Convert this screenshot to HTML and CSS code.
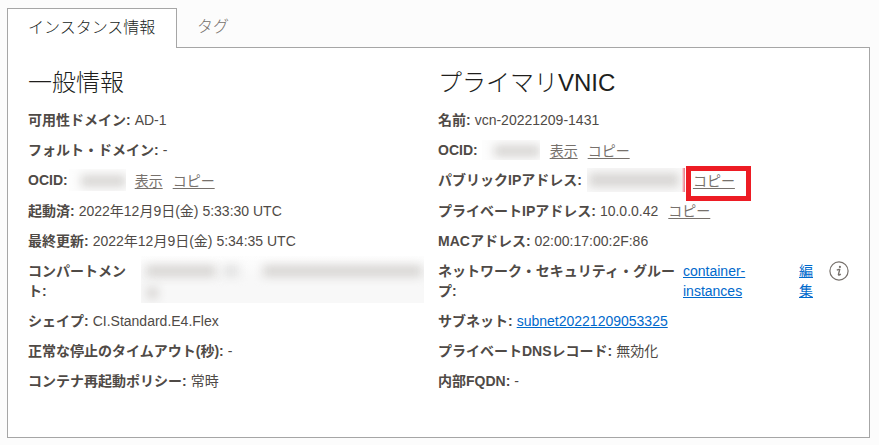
FILE: index.html
```html
<!DOCTYPE html>
<html lang="ja">
<head>
<meta charset="utf-8">
<title>インスタンス情報</title>
<link rel="stylesheet" href="styles.css">
</head>
<body>
<nav class="tabs">
  <div class="tab active">インスタンス情報</div>
  <div class="tab">タグ</div>
</nav>
<main class="panel">
  <section class="general">
    <h2>一般情報</h2>
    <div class="row"><b>可用性ドメイン:</b><span>AD-1</span></div>
    <div class="row"><b>フォルト・ドメイン:</b><span>-</span></div>
    <div class="row with-actions"><b>OCID:</b><span class="mask ocid"><i></i></span><a class="action">表示</a><a class="action">コピー</a></div>
    <div class="row"><b>起動済:</b><span>2022年12月9日(金) 5:33:30 UTC</span></div>
    <div class="row"><b>最終更新:</b><span>2022年12月9日(金) 5:34:35 UTC</span></div>
    <div class="row"><b class="compartment-label">コンパートメント:</b><span class="mask compartment"><i></i><i></i><i></i><i></i></span></div>
    <div class="row"><b>シェイプ:</b><span>CI.Standard.E4.Flex</span></div>
    <div class="row"><b>正常な停止のタイムアウト(秒):</b><span>-</span></div>
    <div class="row"><b>コンテナ再起動ポリシー:</b><span>常時</span></div>
  </section>
  <section class="vnic">
    <h2>プライマリVNIC</h2>
    <div class="row"><b>名前:</b><span>vcn-20221209-1431</span></div>
    <div class="row"><b>OCID:</b><span class="mask vnic-id"><i></i></span><a class="action">表示</a><a class="action">コピー</a></div>
    <div class="row with-actions"><b>パブリックIPアドレス:</b><span class="mask public-ip"><i></i></span><a class="action highlight">コピー</a></div>
    <div class="row"><b>プライベートIPアドレス:</b><span>10.0.0.42</span><a class="action inline">コピー</a></div>
    <div class="row"><b>MACアドレス:</b><span>02:00:17:00:2F:86</span></div>
    <div class="row"><b class="group-label">ネットワーク・セキュリティ・グループ:</b><a class="link group">container-instances</a><a class="link edit">編集</a>
      <svg class="info" width="20" height="20" viewBox="0 0 20 20" fill="none" stroke="#77716c"><circle cx="10" cy="10" r="9.1" stroke-width="1.2"/><circle cx="10.9" cy="5.9" r="1.1" fill="#77716c" stroke="none"/><path d="M7.8 9.2 Q9.3 8.2 10.7 8.5 L9.4 13.5 Q9.5 14.7 11.8 13.1" stroke-width="1.35"/></svg>
    </div>
    <div class="row"><b>サブネット:</b><a class="link">subnet20221209053325</a></div>
    <div class="row"><b>プライベートDNSレコード:</b><span>無効化</span></div>
    <div class="row"><b>内部FQDN:</b><span>-</span></div>
  </section>
</main>
</body>
</html>
```
FILE: styles.css
```css
*, *::after { box-sizing: border-box; }
body {
  margin: 0;
  padding: 8px 9px 7px 7px;
  height: 445px;
  overflow: hidden;
  background: #fcfcfc;
  color: #4f4a46;
  font: 14px/20px "Liberation Sans", "Noto Sans CJK JP", sans-serif;
}
.tabs { display: flex; height: 39px; }
.tab {
  height: 39px;
  padding: 0 20px;
  font-size: 16px;
  line-height: 37px;
  font-weight: 300;
  color: #77716c;
}
.tab.active {
  position: relative;
  height: 40px;
  width: 170px;
  border: 1px solid #a6a6a6;
  border-bottom: 0;
  background: #fff;
  color: #201e1c;
}
.panel {
  display: flex;
  height: 391px;
  padding: 20px 20px 0;
  border: 1px solid #a6a6a6;
  background: #fff;
}
.general { width: 410px; flex: none; }
.vnic { width: 411px; flex: none; }
h2 {
  margin: 0 0 12px;
  height: 30px;
  font-size: 24px;
  line-height: 30px;
  font-weight: 300;
  color: #201e1c;
}
.row {
  display: flex;
  gap: 4px;
  min-height: 20px;
  margin-bottom: 10px;
  white-space: nowrap;
}
.with-actions { margin-bottom: 11px; }
.row b { flex: none; }
.action { margin: 1px 0 -1px 6px; color: #77716c; text-decoration: underline; text-underline-offset: 2px; }
.action.inline { margin-top: 0; margin-bottom: 0; }
.link { color: #0069cc; text-decoration: underline; }
.row .compartment-label { width: 111px; white-space: normal; word-break: break-all; }
.row .group-label { width: 240px; white-space: normal; word-break: break-all; }
.group { width: 112px; white-space: normal; margin-left: 1px; }
.edit { width: 14px; white-space: normal; }
.info { margin-left: 12px; }
.mask { position: relative; overflow: hidden; flex: none; background: #fdfdfd; }
.mask i { position: absolute; background: #d8d6d4; filter: blur(5px); }
.ocid { width: 57px; height: 22px; margin: -1px -1px -1px -3px; }
.ocid i { left: 12px; right: 0; top: 6px; height: 12px; }
.vnic-id { width: 58px; height: 20px; }
.vnic-id i { left: 12px; right: 0; top: 5px; height: 12px; }
.public-ip { width: 98px; height: 24px; margin: -2px 0 -2px 1px; background: linear-gradient(90deg, transparent 95px, #f7b5bc 96px, #ed7080), #fafafa; }
.public-ip i { left: 2px; right: 6px; top: 5px; height: 14px; }
.public-ip + .action { margin-left: 4px; }
.highlight { position: relative; }
.highlight::after {
  content: "";
  position: absolute;
  left: -7px;
  top: -5px;
  width: 65px;
  height: 35px;
  border: 5px solid #ed1c24;
}
.compartment { width: 283px; height: 47px; margin: -5px 0 -2px -2px; background: linear-gradient(#fefefe, #f8f8f8 20px); }
.compartment i { top: 9px; height: 12px; background: #d8d6d4; filter: blur(5px); }
.compartment i:nth-child(1) { left: 5px; width: 70px; }
.compartment i:nth-child(2) { left: 82px; width: 16px; background: #e2e2e2; }
.compartment i:nth-child(3) { left: 122px; width: 159px; }
.compartment i:nth-child(4) { left: 6px; top: 31px; width: 11px; }
```
